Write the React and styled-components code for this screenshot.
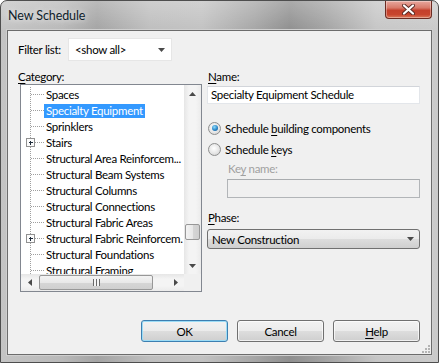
import styled, { createGlobalStyle } from "styled-components";

const FONT = `"Lato", "Liberation Sans", sans-serif`;

const categories = [
    { name: "Spaces" },
    { name: "Specialty Equipment", selected: true },
    { name: "Sprinklers" },
    { name: "Stairs", expandable: true },
    { name: "Structural Area Reinforcem..." },
    { name: "Structural Beam Systems" },
    { name: "Structural Columns" },
    { name: "Structural Connections" },
    { name: "Structural Fabric Areas" },
    { name: "Structural Fabric Reinforcem.", expandable: true },
    { name: "Structural Foundations" },
    { name: "Structural Framing" },
];

const Global = createGlobalStyle`
    body {
        margin: 0;
        background: #fff;
        font-family: ${FONT};
    }
`;

function Arrow({ dir }) {
    const points = {
        up: "0,4 3.5,0 7,4",
        down: "0,0 7,0 3.5,4",
        left: "4,0 4,7 0,3.5",
        right: "0,0 0,7 4,3.5",
    }[dir];
    const horizontal = dir === "left" || dir === "right";
    return (
        <svg width={horizontal ? 4 : 7} height={horizontal ? 7 : 4}>
            <polygon points={points} fill="#4a4a4a" />
        </svg>
    );
}

function Guide({ expandable }) {
    return (
        <GuideSvg width="23" height="16" viewBox="0 0 23 16">
            <line x1="9.5" y1="0" x2="9.5" y2="16" stroke="#a0a0a0" strokeDasharray="1 1" />
            <line x1={expandable ? 14 : 10} y1="7.5" x2="23" y2="7.5" stroke="#a0a0a0" strokeDasharray="1 1" />
            {expandable && (
                <>
                    <rect x="5.5" y="3.5" width="8" height="8" fill="#fbfbfb" stroke="#919191" />
                    <path d="M7.5 7.5h4M9.5 5.5v4" stroke="#1e2b3a" />
                </>
            )}
        </GuideSvg>
    );
}

export default function App() {
    return (
        <>
            <Global />
            <Window>
                <TitleBar>
                    <Title>New Schedule</Title>
                    <CloseButton>
                        <svg width="13" height="11" viewBox="0 0 13 11">
                            <path d="M2 1.5l9 8M11 1.5l-9 8" stroke="#5b2a24" strokeWidth="4" strokeLinecap="round" />
                            <path d="M2 1.5l9 8M11 1.5l-9 8" stroke="#fff" strokeWidth="2.2" strokeLinecap="round" />
                        </svg>
                    </CloseButton>
                </TitleBar>
                <Client>
                    <FilterRow>
                        <FilterLabel>Filter list:</FilterLabel>
                        <FilterSelect>
                            <span>&lt;show all&gt;</span>
                            <Arrow dir="down" />
                        </FilterSelect>
                    </FilterRow>
                    <Body>
                        <Column>
                            <Label><Key>C</Key>ategory:</Label>
                            <Tree>
                                <ItemsPane>
                                    {categories.map(item => (
                                        <Row key={item.name}>
                                            <Guide expandable={item.expandable} />
                                            <ItemLabel $selected={item.selected}>{item.name}</ItemLabel>
                                        </Row>
                                    ))}
                                </ItemsPane>
                                <VScroll>
                                    <ArrowCell><Arrow dir="up" /></ArrowCell>
                                    <VTrack>
                                        <VThumb $offset={122} $size={16} />
                                    </VTrack>
                                    <ArrowCell><Arrow dir="down" /></ArrowCell>
                                </VScroll>
                                <HScroll>
                                    <ArrowCell><Arrow dir="left" /></ArrowCell>
                                    <HTrack>
                                        <HThumb $offset={1} $size={114}>
                                            <Grip />
                                        </HThumb>
                                    </HTrack>
                                    <ArrowCell><Arrow dir="right" /></ArrowCell>
                                </HScroll>
                                <Corner />
                            </Tree>
                        </Column>
                        <Column>
                            <Label><Key>N</Key>ame:</Label>
                            <TextBox $mt={2}>Specialty Equipment Schedule</TextBox>
                            <RadioRow $mt={16}>
                                <RadioDot $checked />
                                <span>Schedule <Key>b</Key>uilding components</span>
                            </RadioRow>
                            <RadioRow $mt={5}>
                                <RadioDot />
                                <span>Schedule <Key>k</Key>eys</span>
                            </RadioRow>
                            <Label $disabled $indent={20} $mt={4}>Ke<Key>y</Key> name:</Label>
                            <TextBox $disabled $indent={20} $mt={3} />
                            <Label $mt={12}><Key>P</Key>hase:</Label>
                            <Combo>
                                <span>New Construction</span>
                                <Arrow dir="down" />
                            </Combo>
                        </Column>
                    </Body>
                    <ButtonRow>
                        <Button $default>OK</Button>
                        <Button>Cancel</Button>
                        <Button><Key>H</Key>elp</Button>
                    </ButtonRow>
                    <ResizeGrip width="8" height="8" viewBox="0 0 8 8">
                        {[[6, 0], [6, 3], [3, 3], [6, 6], [3, 6], [0, 6]].map(([x, y]) => (
                            <rect key={`${x}-${y}`} x={x} y={y} width="2" height="2" fill="#b4b4b4" />
                        ))}
                    </ResizeGrip>
                </Client>
            </Window>
        </>
    );
}

const Window = styled.div`
    width: 439px;
    height: 363px;
    box-sizing: border-box;
    border: 1px solid #4e4e4e;
    border-radius: 7px 7px 0 0;
    padding: 0 6px 7px;
    display: flex;
    flex-direction: column;
    background:
        linear-gradient(rgba(255, 255, 255, 0.25), rgba(255, 255, 255, 0) 30px),
        linear-gradient(90deg, #c4c4c4 0%, #b9b9b9 14%, #a4a4a4 22%, #bebebe 34%, #c2c2c2 46%, #a6a6a6 58%, #8f8f8f 66%, #a2a2a2 74%, #c6c6c6 86%, #cacaca 100%);
`;

const TitleBar = styled.div`
    height: 29px;
    display: flex;
    justify-content: space-between;
    align-items: flex-start;
`;

const Title = styled.div`
    margin: 7px 0 0 1px;
    font-size: 12.5px;
    line-height: 15px;
    letter-spacing: -0.1px;
    color: #0f1d2b;
    text-shadow: 0 0 6px rgba(255, 255, 255, 0.9);
`;

const CloseButton = styled.div`
    width: 47px;
    height: 18px;
    box-sizing: border-box;
    border: 1px solid #6b2b22;
    border-top: none;
    border-radius: 0 0 4px 4px;
    background: linear-gradient(#e8a89e 0%, #d87a6a 40%, #c4402c 55%, #c8452e 80%, #da7a5c 100%);
    box-shadow: inset 0 0 0 1px rgba(255, 255, 255, 0.35);
    display: flex;
    align-items: center;
    justify-content: center;
`;

const Client = styled.div`
    position: relative;
    flex: 1;
    box-sizing: border-box;
    border: 1px solid #6c6c6c;
    box-shadow: 0 0 0 1px #cfcfcf;
    background: #f0f0f0;
    padding: 7px 11px 12px 9px;
    display: flex;
    flex-direction: column;
    font-size: 11.5px;
    letter-spacing: -0.3px;
    color: #000;
`;

const FilterRow = styled.div`
    display: flex;
    align-items: center;
    height: 23px;
`;

const FilterLabel = styled.span`
    width: 51px;
    padding-left: 1px;
    box-sizing: border-box;
    white-space: nowrap;
`;

const FilterSelect = styled.div`
    width: 104px;
    height: 23px;
    box-sizing: border-box;
    background: #fff;
    border: 1px solid #e6e6e6;
    display: flex;
    align-items: center;
    justify-content: space-between;
    padding: 0 6px 0 6px;
`;

const Body = styled.div`
    margin-top: 8px;
    display: grid;
    grid-template-columns: 185px 213px;
    column-gap: 5px;
`;

const Column = styled.div`
    display: flex;
    flex-direction: column;
`;

const Key = styled.span`
    text-decoration: underline;
    text-underline-offset: 2px;
`;

const Label = styled.div`
    height: 15px;
    line-height: 15px;
    padding-left: 1px;
    margin-top: ${p => p.$mt || 0}px;
    margin-left: ${p => p.$indent || 0}px;
    color: ${p => p.$disabled ? "#a0a0a0" : "#000"};
    white-space: nowrap;
`;

const Tree = styled.div`
    margin-left: 3px;
    width: 182px;
    height: 208px;
    box-sizing: border-box;
    border: 1px solid #828790;
    background: #fff;
    display: grid;
    grid-template-columns: 1fr 17px;
    grid-template-rows: 1fr 17px;
`;

const ItemsPane = styled.div`
    overflow: hidden;
    padding-top: 2px;
`;

const Row = styled.div`
    display: flex;
    align-items: center;
    height: 16px;
`;

const GuideSvg = styled.svg`
    flex: none;
    shape-rendering: crispEdges;
`;

const ItemLabel = styled.span`
    height: 14px;
    line-height: 14px;
    padding: 0 2px;
    margin-top: -1px;
    white-space: nowrap;
    background: ${p => p.$selected ? "#3399ff" : "transparent"};
    color: ${p => p.$selected ? "#fff" : "#000"};
`;

const VScroll = styled.div`
    display: flex;
    flex-direction: column;
    background: linear-gradient(90deg, #e6e6e6, #f4f4f4 30%, #f4f4f4 70%, #ebebeb);
`;

const HScroll = styled.div`
    display: flex;
    background: linear-gradient(#e6e6e6, #f4f4f4 30%, #f4f4f4 70%, #ebebeb);
`;

const ArrowCell = styled.div`
    width: 17px;
    height: 17px;
    flex: none;
    display: flex;
    align-items: center;
    justify-content: center;
`;

const VTrack = styled.div`
    flex: 1;
    display: flex;
    flex-direction: column;
`;

const HTrack = styled.div`
    flex: 1;
    display: flex;
`;

const VThumb = styled.div`
    margin: ${p => p.$offset}px 0 0 1px;
    width: 15px;
    height: ${p => p.$size}px;
    box-sizing: border-box;
    border: 1px solid #979797;
    border-radius: 2px;
    background: linear-gradient(90deg, #f3f3f3, #e8e8e8 50%, #d6d6d6 51%, #cfcfcf);
`;

const HThumb = styled.div`
    margin: 1px 0 0 ${p => p.$offset}px;
    width: ${p => p.$size}px;
    height: 15px;
    box-sizing: border-box;
    border: 1px solid #979797;
    border-radius: 2px;
    background: linear-gradient(#f3f3f3, #e8e8e8 50%, #d6d6d6 51%, #cfcfcf);
    display: flex;
    align-items: center;
    justify-content: center;
`;

const Grip = styled.div`
    width: 7px;
    height: 7px;
    background: repeating-linear-gradient(90deg, #6a6a6a 0 1px, #f4f4f4 1px 3px);
`;

const Corner = styled.div`
    background: #f0f0f0;
`;

const TextBox = styled.div`
    margin-top: ${p => p.$mt || 0}px;
    margin-left: ${p => p.$indent || 0}px;
    height: ${p => p.$disabled ? 19 : 18}px;
    box-sizing: border-box;
    border: 1px solid ${p => p.$disabled ? "#b2b5b8" : "#e3e6ea"};
    border-top-color: ${p => p.$disabled ? "#a9acaf" : "#d2d5da"};
    background: ${p => p.$disabled ? "#f0f0f0" : "#fff"};
    padding-left: 3px;
    line-height: 16px;
    white-space: nowrap;
`;

const RadioRow = styled.div`
    margin-top: ${p => p.$mt}px;
    height: 16px;
    display: flex;
    align-items: center;
    gap: 4px;
    padding-left: 1px;
    white-space: nowrap;
`;

const RadioDot = styled.span`
    width: 13px;
    height: 13px;
    box-sizing: border-box;
    border-radius: 50%;
    border: 1px solid #8e8f8f;
    background: radial-gradient(circle at 45% 40%, #ffffff 0%, #e6e6e6 55%, #c9c9c9 100%);
    display: flex;
    align-items: center;
    justify-content: center;
    &::after {
        content: "";
        width: 6px;
        height: 6px;
        border-radius: 50%;
        background: radial-gradient(circle at 40% 35%, #8fdcfb 0%, #2a86c8 55%, #0d4f85 100%);
        display: ${p => p.$checked ? "block" : "none"};
    }
`;

const Combo = styled.div`
    margin-top: 4px;
    height: 20px;
    box-sizing: border-box;
    border: 1px solid #707070;
    border-radius: 3px;
    background: linear-gradient(#f2f2f2 0%, #ebebeb 50%, #dddddd 51%, #cfcfcf 100%);
    display: flex;
    align-items: center;
    justify-content: space-between;
    padding: 0 5px 0 4px;
`;

const ButtonRow = styled.div`
    margin-top: auto;
    display: flex;
    justify-content: flex-end;
    gap: 9px;
`;

const Button = styled.button`
    width: 87px;
    height: 22px;
    padding: 0;
    font-family: ${FONT};
    font-size: 11.5px;
    font-weight: 400;
    letter-spacing: -0.3px;
    color: #000;
    border: 1px solid ${p => p.$default ? "#3c7fb1" : "#707070"};
    border-radius: 3px;
    background: linear-gradient(#f2f2f2 0%, #ebebeb 50%, #dddddd 51%, #cfcfcf 100%);
    box-shadow: inset 0 0 0 1px ${p => p.$default ? "#9cdcf6" : "rgba(255, 255, 255, 0.7)"};
`;

const ResizeGrip = styled.svg`
    position: absolute;
    right: 1px;
    bottom: 1px;
`;
